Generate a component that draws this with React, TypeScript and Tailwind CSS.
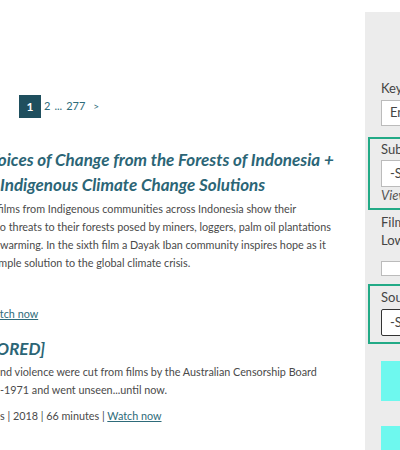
import React from 'react';

const teal = 'text-[#2b6576]';

function Line({ children, className = '' }: { children: React.ReactNode; className?: string }) {
  return <div className={`whitespace-nowrap ${className}`}>{children}</div>;
}

export default function App() {
  return (
    <div className="flex h-[450px] w-[400px] overflow-hidden bg-white font-['Lato','Noto_Sans',sans-serif] text-[#4a4a4a]">
      {/* main column */}
      <main className="w-[365px] shrink-0 overflow-hidden">
        <nav className="mt-[95px] flex items-center gap-[4px] pl-[19px] text-[11px] text-[#2e6b7a]">
          <span className="flex h-[23px] w-[22px] items-center justify-center bg-[#1f4f5e] text-[12px] font-bold text-white">1</span>
          <span className="-ml-[1px]">2</span>
          <span>...</span>
          <span>277</span>
          <span className="ml-[4px] text-[10px]">&gt;</span>
        </nav>

        <h2 className={`mt-[29px] text-[17px] font-bold italic leading-[25px] ${teal}`}>
          <Line className="-ml-[12px]">Voices of Change from the Forests of Indonesia +</Line>
          <Line>Indigenous Climate Change Solutions</Line>
        </h2>

        <div className="mt-[3px] text-[10.8px] leading-[18px]">
          <Line className="-ml-[19px]">Six films from Indigenous communities across Indonesia show their</Line>
          <Line className="-ml-[4px]">to threats to their forests posed by miners, loggers, palm oil plantations</Line>
          <Line>warming. In the sixth film a Dayak Iban community inspires hope as it</Line>
          <Line className="-ml-[9px]">simple solution to the global climate crisis.</Line>
        </div>

        <div className="mt-[33px] text-[10.8px] leading-[18px]">
          <Line className="-ml-[16px]">
            <a className="text-[#2e6b7a] underline">Watch now</a>
          </Line>
        </div>

        <h2 className={`mt-[13px] text-[17px] font-bold italic leading-[25px] ${teal}`}>
          <Line className="-ml-[49px]">[CENSORED]</Line>
        </h2>

        <div className="mt-[2px] text-[10.8px] leading-[18px]">
          <Line>nd violence were cut from films by the Australian Censorship Board</Line>
          <Line>-1971 and went unseen...until now.</Line>
        </div>

        <div className="mt-[8px] text-[10.8px] leading-[18px]">
          <Line>
            s | 2018 | 66 minutes | <a className="text-[#2e6b7a] underline">Watch now</a>
          </Line>
        </div>
      </main>

      {/* sidebar */}
      <aside className="mt-[12px] w-[260px] shrink-0 bg-[#ececec] pt-[67px] text-[13px] text-[#444]">
        <div className="pl-[16px]">
          <div className="leading-[18px]">Keyword</div>
          <div className="mt-[3px] flex h-[26px] items-center border border-[#bbb] bg-white pl-[8px]">Enter keyword</div>
        </div>

        <div className="ml-[3px] mt-[11px] border-2 border-[#22aa86] pb-[4px] pl-[11px] pt-[2px]">
          <div className="leading-[16px]">Subject</div>
          <div className="mt-[3px] flex h-[27px] items-center border border-[#bbb] bg-white pl-[8px]">-Select-</div>
          <div className="-mt-[1px] italic leading-[18px] text-[#555]">View all subjects</div>
        </div>

        <div className="pl-[16px] pt-[3px] leading-[18px]">
          <div>Film year</div>
          <div>Low</div>
          <div className="mt-[12px] h-[15px] border border-[#bbb] bg-white" />
        </div>

        <div className="ml-[3px] mt-[8px] border-2 border-[#22aa86] pb-[6px] pl-[11px] pt-[2px]">
          <div className="leading-[18px]">Source</div>
          <div className="mt-[3px] flex h-[27px] items-center rounded-[2px] border border-[#333] bg-white pl-[8px]">-Select-</div>
        </div>

        <div className="ml-[16px] mt-[17px] h-[40px] bg-[#6ef8ee]" />
        <div className="ml-[16px] mt-[25px] h-[40px] bg-[#6ef8ee]" />
      </aside>
    </div>
  );
}
